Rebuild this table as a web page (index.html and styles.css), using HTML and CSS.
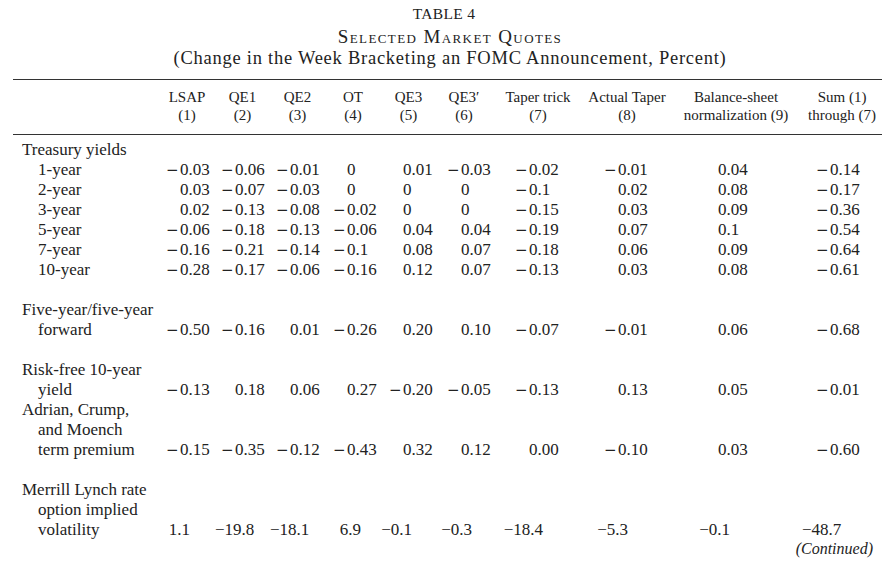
FILE: index.html
```html
<!DOCTYPE html>
<html lang="en">
<head>
<meta charset="utf-8">
<title>Table 4 — Selected Market Quotes</title>
<link rel="stylesheet" href="styles.css">
</head>
<body>
<div class="page">
  <header class="title">
    <div class="t1">TABLE 4</div>
    <div class="t2">Selected Market Quotes</div>
    <div class="t3">(Change in the Week Bracketing an FOMC Announcement, Percent)</div>
  </header>
  <table class="quotes">
    <colgroup>
      <col class="c-label"><col class="c1"><col class="c2"><col class="c3"><col class="c4"><col class="c5"><col class="c6"><col class="c7"><col class="c8"><col class="c9"><col class="c10">
    </colgroup>
    <thead>
      <tr>
        <th></th>
        <th>LSAP<br>(1)</th>
        <th>QE1<br>(2)</th>
        <th>QE2<br>(3)</th>
        <th>OT<br>(4)</th>
        <th>QE3<br>(5)</th>
        <th>QE3′<br>(6)</th>
        <th>Taper trick<br>(7)</th>
        <th>Actual Taper<br>(8)</th>
        <th>Balance-sheet<br>normalization (9)</th>
        <th class="last">Sum (1)<br>through (7)</th>
      </tr>
    </thead>
    <tbody>
      <tr><td class="lab">Treasury yields</td><td></td><td></td><td></td><td></td><td></td><td></td><td></td><td></td><td></td><td></td></tr>
      <tr><td class="lab sub">1-year</td><td><span class="m">−</span>0.03</td><td><span class="m">−</span>0.06</td><td><span class="m">−</span>0.01</td><td><span class="m"></span>0</td><td><span class="m"></span>0.01</td><td><span class="m">−</span>0.03</td><td><span class="m">−</span>0.02</td><td><span class="m">−</span>0.01</td><td><span class="m"></span>0.04</td><td><span class="m">−</span>0.14</td></tr>
      <tr><td class="lab sub">2-year</td><td><span class="m"></span>0.03</td><td><span class="m">−</span>0.07</td><td><span class="m">−</span>0.03</td><td><span class="m"></span>0</td><td><span class="m"></span>0</td><td><span class="m"></span>0</td><td><span class="m">−</span>0.1</td><td><span class="m"></span>0.02</td><td><span class="m"></span>0.08</td><td><span class="m">−</span>0.17</td></tr>
      <tr><td class="lab sub">3-year</td><td><span class="m"></span>0.02</td><td><span class="m">−</span>0.13</td><td><span class="m">−</span>0.08</td><td><span class="m">−</span>0.02</td><td><span class="m"></span>0</td><td><span class="m"></span>0</td><td><span class="m">−</span>0.15</td><td><span class="m"></span>0.03</td><td><span class="m"></span>0.09</td><td><span class="m">−</span>0.36</td></tr>
      <tr><td class="lab sub">5-year</td><td><span class="m">−</span>0.06</td><td><span class="m">−</span>0.18</td><td><span class="m">−</span>0.13</td><td><span class="m">−</span>0.06</td><td><span class="m"></span>0.04</td><td><span class="m"></span>0.04</td><td><span class="m">−</span>0.19</td><td><span class="m"></span>0.07</td><td><span class="m"></span>0.1</td><td><span class="m">−</span>0.54</td></tr>
      <tr><td class="lab sub">7-year</td><td><span class="m">−</span>0.16</td><td><span class="m">−</span>0.21</td><td><span class="m">−</span>0.14</td><td><span class="m">−</span>0.1</td><td><span class="m"></span>0.08</td><td><span class="m"></span>0.07</td><td><span class="m">−</span>0.18</td><td><span class="m"></span>0.06</td><td><span class="m"></span>0.09</td><td><span class="m">−</span>0.64</td></tr>
      <tr><td class="lab sub">10-year</td><td><span class="m">−</span>0.28</td><td><span class="m">−</span>0.17</td><td><span class="m">−</span>0.06</td><td><span class="m">−</span>0.16</td><td><span class="m"></span>0.12</td><td><span class="m"></span>0.07</td><td><span class="m">−</span>0.13</td><td><span class="m"></span>0.03</td><td><span class="m"></span>0.08</td><td><span class="m">−</span>0.61</td></tr>
      <tr class="gap"><td colspan="11"></td></tr>
      <tr><td class="lab"><div>Five-year/five-year</div><div class="sub">forward</div></td><td><span class="m">−</span>0.50</td><td><span class="m">−</span>0.16</td><td><span class="m"></span>0.01</td><td><span class="m">−</span>0.26</td><td><span class="m"></span>0.20</td><td><span class="m"></span>0.10</td><td><span class="m">−</span>0.07</td><td><span class="m">−</span>0.01</td><td><span class="m"></span>0.06</td><td><span class="m">−</span>0.68</td></tr>
      <tr class="gap"><td colspan="11"></td></tr>
      <tr><td class="lab"><div>Risk-free 10-year</div><div class="sub">yield</div></td><td><span class="m">−</span>0.13</td><td><span class="m"></span>0.18</td><td><span class="m"></span>0.06</td><td><span class="m"></span>0.27</td><td><span class="m">−</span>0.20</td><td><span class="m">−</span>0.05</td><td><span class="m">−</span>0.13</td><td><span class="m"></span>0.13</td><td><span class="m"></span>0.05</td><td><span class="m">−</span>0.01</td></tr>
      <tr><td class="lab"><div>Adrian, Crump,</div><div class="sub">and Moench</div><div class="sub">term premium</div></td><td><span class="m">−</span>0.15</td><td><span class="m">−</span>0.35</td><td><span class="m">−</span>0.12</td><td><span class="m">−</span>0.43</td><td><span class="m"></span>0.32</td><td><span class="m"></span>0.12</td><td><span class="m"></span>0.00</td><td><span class="m">−</span>0.10</td><td><span class="m"></span>0.03</td><td><span class="m">−</span>0.60</td></tr>
      <tr class="gap"><td colspan="11"></td></tr>
      <tr class="ml"><td class="lab"><div>Merrill Lynch rate</div><div class="sub">option implied</div><div class="sub">volatility</div></td><td>1.1</td><td>−19.8</td><td>−18.1</td><td>6.9</td><td>−0.1</td><td>−0.3</td><td>−18.4</td><td>−5.3</td><td>−0.1</td><td>−48.7</td></tr>
    </tbody>
  </table>
  <div class="cont">(Continued)</div>
</div>
</body>
</html>
```

FILE: styles.css
```css
html, body {
  margin: 0;
  padding: 0;
  background: #ffffff;
}

body {
  font-family: "Liberation Serif", "Times New Roman", serif;
  color: #222;
}

.page {
  width: 888px;
  height: 575px;
  overflow: hidden;
}

.title {
  width: 882px;
  padding-top: 3px;
  text-align: center;
  font-family: "Liberation Serif", "Times New Roman", serif;
}

.t1 {
  font-size: 15.5px;
  line-height: 22px;
  letter-spacing: 0.3px;
  padding-left: 6px;
}

.t2 {
  font-size: 19px;
  line-height: 23px;
  font-variant: small-caps;
  letter-spacing: 1.4px;
  padding-left: 18px;
}

.t3 {
  font-size: 18.5px;
  line-height: 21px;
  letter-spacing: 0.75px;
  padding-left: 18px;
}

.quotes {
  margin: 10px 0 0 13px;
  width: 869px;
  table-layout: fixed;
  border-collapse: collapse;
  border-spacing: 0;
  font-family: "Liberation Serif", "Times New Roman", serif;
  color: #222;
}

.c-label { width: 146px; }
.c1 { width: 56px; }
.c2 { width: 55px; }
.c3 { width: 55px; }
.c4 { width: 56px; }
.c5 { width: 55px; }
.c6 { width: 56px; }
.c7 { width: 92px; }
.c8 { width: 86px; }
.c9 { width: 132px; }
.c10 { width: 80px; }

.quotes thead th {
  font-weight: normal;
  font-size: 15px;
  line-height: 18px;
  text-align: center;
  white-space: nowrap;
  padding: 8px 0 10px;
  border-top: 1.5px solid #333;
  border-bottom: 1.5px solid #333;
}

.quotes tbody td {
  padding: 0;
  font-size: 17px;
  line-height: 20px;
  vertical-align: bottom;
  white-space: nowrap;
}

.quotes tbody tr:first-child td {
  padding-top: 5px;
}

.lab {
  padding-left: 9px !important;
}

.sub {
  padding-left: 16px;
}

td.sub {
  padding-left: 25px !important;
}

.m {
  display: inline-block;
  width: 14px;
  font-family: "DejaVu Serif", serif;
  font-size: 15px;
  font-weight: 300;
}

.gap td {
  height: 20px;
}

/* number column offsets (left edge of the minus position) */
.quotes tbody td:nth-child(2) { padding-left: 7px; }
.quotes tbody td:nth-child(3) { padding-left: 6px; }
.quotes tbody td:nth-child(4) { padding-left: 6px; }
.quotes tbody td:nth-child(5) { padding-left: 8px; }
.quotes tbody td:nth-child(6) { padding-left: 8px; }
.quotes tbody td:nth-child(7) { padding-left: 11px; }
.quotes tbody td:nth-child(8) { padding-left: 23px; }
.quotes tbody td:nth-child(9) { padding-left: 20px; }
.quotes tbody td:nth-child(10) { padding-left: 34px; }
.quotes tbody td:nth-child(11) { padding-left: 14px; }

/* Merrill Lynch row: right-aligned figures */
.quotes tbody tr.ml td { text-align: right; padding-left: 0; }
.quotes tbody tr.ml td.lab { text-align: left; }
.quotes tbody tr.ml td:nth-child(2) { padding-right: 25px; }
.quotes tbody tr.ml td:nth-child(3) { padding-right: 23px; }
.quotes tbody tr.ml td:nth-child(4) { padding-right: 23px; }
.quotes tbody tr.ml td:nth-child(5) { padding-right: 20px; }
.quotes tbody tr.ml td:nth-child(6) { padding-right: 24px; }
.quotes tbody tr.ml td:nth-child(7) { padding-right: 20px; }
.quotes tbody tr.ml td:nth-child(8) { padding-right: 41px; }
.quotes tbody tr.ml td:nth-child(9) { padding-right: 42px; }
.quotes tbody tr.ml td:nth-child(10) { padding-right: 72px; }
.quotes tbody tr.ml td:nth-child(11) { padding-right: 42px; }

.cont {
  width: 873px;
  text-align: right;
  font-style: italic;
  font-size: 16px;
  line-height: 18px;
  font-family: "Liberation Serif", "Times New Roman", serif;
}
```
